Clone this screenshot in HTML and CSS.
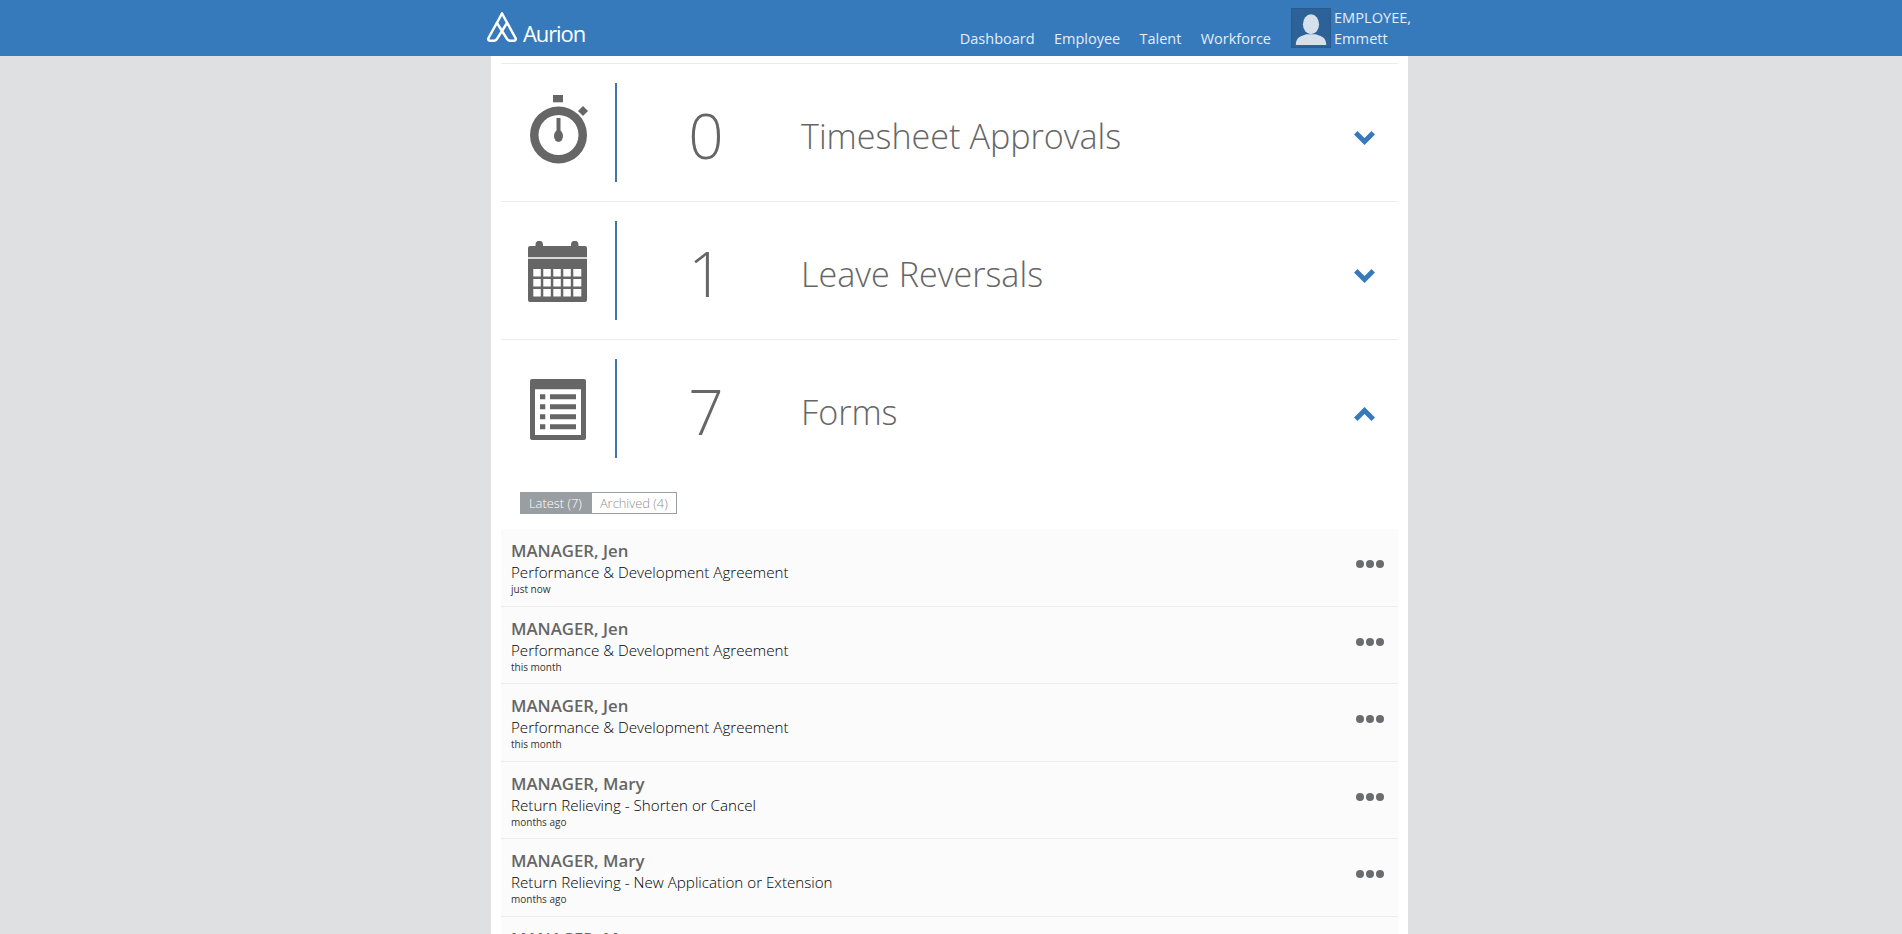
FILE: index.html

```html
<!DOCTYPE html>
<html lang="en">
<head>
  <meta charset="UTF-8">
  <title>Aurion</title>
  <link rel="stylesheet" href="styles.css">
</head>
<body>
  <header class="topbar">
    <div class="topbar-inner">
      <a class="logo" href="#">
        <svg class="logo-mark" viewBox="0 0 30 30" width="30" height="30" fill="none" stroke="#fff" stroke-width="2.500" stroke-linejoin="round" stroke-linecap="round">
          <path d="M15 1.500 L1.500 26 Q0.500 28.800 3.500 28.800 H6.500 Q8.800 28.800 10 26.800 L20 11"/>
          <path d="M15 1.500 L28.500 26 Q29.500 28.800 26.500 28.800 H23.500 Q21.200 28.800 20 26.800 L10 11"/>
        </svg>
        <span class="logo-text">Aurion</span>
      </a>
      <nav class="nav">
        <a href="#">Dashboard</a>
        <a href="#">Employee</a>
        <a href="#">Talent</a>
        <a href="#">Workforce</a>
      </nav>
      <div class="user">
        <svg class="avatar" viewBox="0 0 40 40" width="40" height="40">
          <rect width="40" height="40" fill="#2d6298"/>
          <ellipse cx="20" cy="16" rx="8.500" ry="10.500" fill="#d5e0ec"/>
          <path d="M4 38 C4 31 7 29 15 26.500 H25 C33 29 36 31 36 38 Z" fill="#d5e0ec"/>
        </svg>
        <div class="user-name">EMPLOYEE,<br>Emmett</div>
      </div>
    </div>
  </header>

  <main class="panel">
    <section class="summary">
      <div class="summary-icon">
        <svg class="icon-timer" viewBox="0 0 58 70" width="58" height="70" fill="#666">
          <rect x="23" y="0" width="10" height="7.300"/>
          <path fill-rule="evenodd" d="M28.500 11.500a28.500 28.500 0 1 0 0 57a28.500 28.500 0 0 0 0-57zM28.500 20a20 20 0 1 1 0 40a20 20 0 0 1 0-40z"/>
          <path d="M53 11l5 5-5 5-5-5z"/>
          <rect x="26.500" y="23" width="4" height="14"/>
          <ellipse cx="28.500" cy="41" rx="4.500" ry="6"/>
        </svg>
      </div>
      <div class="count">0</div>
      <h2 class="title">Timesheet Approvals</h2>
      <svg class="chevron" viewBox="0 0 21 14" width="21" height="14"><path d="M0 3.500 3.500 0 10.500 7 17.500 0 21 3.500 10.500 14z" fill="#377abc"/></svg>
    </section>

    <section class="summary">
      <div class="summary-icon">
        <svg class="icon-calendar" viewBox="0 0 59 61" width="59" height="61" fill="#666">
          <path d="M7.500 5V3.500a3.700 3.700 0 0 1 7.500 0V5h28V3.500a3.700 3.700 0 0 1 7.500 0V5H57a2 2 0 0 1 2 2v9.300H0V7a2 2 0 0 1 2-2z"/>
          <path fill-rule="evenodd" d="M0 17.700h59V59a2 2 0 0 1-2 2H2a2 2 0 0 1-2-2zM5.300 28v7.500h7.500V28zM15.300 28v7.500h7.500V28zM25.300 28v7.500h7.500V28zM35.300 28v7.500h7.500V28zM45.300 28v7.500h8V28zM5.300 38v7.500h7.500V38zM15.300 38v7.500h7.500V38zM25.300 38v7.500h7.500V38zM35.300 38v7.500h7.500V38zM45.300 38v7.500h8V38zM5.300 48v7.500h7.500V48zM15.300 48v7.500h7.500V48zM25.300 48v7.500h7.500V48zM35.300 48v7.500h7.500V48zM45.300 48v7.500h8V48z"/>
        </svg>
      </div>
      <div class="count">1</div>
      <h2 class="title">Leave Reversals</h2>
      <svg class="chevron" viewBox="0 0 21 14" width="21" height="14"><path d="M0 3.500 3.500 0 10.500 7 17.500 0 21 3.500 10.500 14z" fill="#377abc"/></svg>
    </section>

    <section class="summary">
      <div class="summary-icon">
        <svg class="icon-forms" viewBox="0 0 56 61" width="56" height="61" fill="#666">
          <path fill-rule="evenodd" d="M2 0h52a2 2 0 0 1 2 2v57a2 2 0 0 1-2 2H2a2 2 0 0 1-2-2V2a2 2 0 0 1 2-2zM5 10.300V56h46V10.300z"/>
          <path d="M10 15.300h5.300v5H10zM20 15.300h26v5H20zM10 25.300h5.300v5H10zM20 25.300h26v5H20zM10 35.300h5.300v5H10zM20 35.300h26v5H20zM10 45.300h5.300v5H10zM20 45.300h26v5H20z"/>
        </svg>
      </div>
      <div class="count">7</div>
      <h2 class="title">Forms</h2>
      <svg class="chevron chevron-up" viewBox="0 0 21 14" width="21" height="14"><path d="M0 3.500 3.500 0 10.500 7 17.500 0 21 3.500 10.500 14z" fill="#377abc"/></svg>
    </section>

    <div class="tabs">
      <a class="tab tab-active" href="#">Latest (7)</a>
      <a class="tab" href="#">Archived (4)</a>
    </div>

    <ul class="forms">
      <li class="form-row">
        <div>
          <div class="form-name">MANAGER, Jen</div>
          <div class="form-type">Performance &amp; Development Agreement</div>
          <div class="form-time">just now</div>
        </div>
        <div class="dots"><i></i><i></i><i></i></div>
      </li>
      <li class="form-row">
        <div>
          <div class="form-name">MANAGER, Jen</div>
          <div class="form-type">Performance &amp; Development Agreement</div>
          <div class="form-time">this month</div>
        </div>
        <div class="dots"><i></i><i></i><i></i></div>
      </li>
      <li class="form-row">
        <div>
          <div class="form-name">MANAGER, Jen</div>
          <div class="form-type">Performance &amp; Development Agreement</div>
          <div class="form-time">this month</div>
        </div>
        <div class="dots"><i></i><i></i><i></i></div>
      </li>
      <li class="form-row">
        <div>
          <div class="form-name">MANAGER, Mary</div>
          <div class="form-type">Return Relieving - Shorten or Cancel</div>
          <div class="form-time">months ago</div>
        </div>
        <div class="dots"><i></i><i></i><i></i></div>
      </li>
      <li class="form-row">
        <div>
          <div class="form-name">MANAGER, Mary</div>
          <div class="form-type">Return Relieving - New Application or Extension</div>
          <div class="form-time">months ago</div>
        </div>
        <div class="dots"><i></i><i></i><i></i></div>
      </li>
      <li class="form-row">
        <div>
          <div class="form-name">MANAGER, Mary</div>
        </div>
      </li>
    </ul>
  </main>
</body>
</html>
```

FILE: styles.css

```css
html, body {
  height: 100%;
  overflow: hidden;
}

body {
  margin: 0;
  background: #dfe0e2;
  font-family: "Open Sans", sans-serif;
  color: #666;
}

a {
  color: inherit;
  text-decoration: none;
}

.topbar {
  height: 56px;
  background: #377abc;
  color: #e4edf6;
}

.topbar-inner {
  width: 932px;
  height: 56px;
  margin-left: calc(50% - 467px);
  display: flex;
}

.logo {
  display: flex;
  align-items: flex-end;
  gap: 6px;
  padding: 0 0 14px 3px;
  color: #fff;
}

.logo-text {
  font-size: 22px;
  line-height: 20px;
  font-weight: 400;
  letter-spacing: -1.100px;
  margin-bottom: -1px;
}

.nav {
  margin-left: auto;
  display: flex;
  gap: 19.300px;
  padding-top: 28px;
  font-size: 14.500px;
  line-height: 22px;
}

.user {
  display: flex;
  gap: 3px;
  margin: 8px 0 0 20px;
  width: 125px;
}

.avatar {
  display: block;
  border: 1px solid #2b5a8c;
  box-sizing: border-box;
}

.user-name {
  font-size: 14.600px;
  line-height: 21px;
  margin-top: -1px;
}

.panel {
  width: 917px;
  margin-left: calc(50% - 460px);
  padding: 7px 10px 0;
  box-sizing: border-box;
  background: #fff;
  min-height: 878px;
}

.summary {
  height: 138px;
  border-top: 1px solid #e9eded;
  display: flex;
  align-items: center;
  box-sizing: border-box;
}

.summary-icon {
  width: 114px;
  height: 99px;
  border-right: 2px solid #3f76a5;
  display: flex;
  align-items: center;
  justify-content: center;
  flex: none;
}

.icon-timer {
  margin: -5px 0 0 1px;
}

.icon-calendar {
  margin: 2px 2px 0 0;
}

.icon-forms {
  margin-top: 2px;
}

.count {
  width: 178px;
  margin-top: 6px;
  text-align: center;
  font-size: 62px;
  font-weight: 300;
  line-height: 99px;
  flex: none;
}

.title {
  margin: 5px 0 0 6px;
  font-size: 34.150px;
  font-weight: 300;
  flex: 1;
}

.chevron {
  margin: 11px 23px 0 0;
}

.chevron-up {
  transform: scaleY(-1);
}

.tabs {
  display: flex;
  margin: 15px 0 15px 19px;
  font-size: 12.900px;
  font-weight: 300;
  line-height: 20px;
}

.tab {
  border: 1px solid #999ea2;
  padding: 0 8px;
  color: #8f8f8f;
}

.tab-active {
  background: #999ea2;
  color: #fff;
}

.forms {
  list-style: none;
  margin: 0;
  padding: 0;
}

.form-row {
  height: 77.500px;
  box-sizing: border-box;
  background: #fbfbfb;
  border-bottom: 1px solid #e9eded;
  padding: 10px 14px 0 10px;
  display: flex;
  justify-content: space-between;
}

.form-name {
  font-size: 16.800px;
  font-weight: 600;
  line-height: 24px;
}

.form-type {
  font-size: 15.170px;
  font-weight: 300;
  line-height: 19px;
  color: #000;
}

.form-time {
  font-size: 10px;
  line-height: 14px;
  color: #333;
}

.dots {
  display: flex;
  gap: 2px;
  margin-top: 21px;
}

.dots i {
  width: 8px;
  height: 8px;
  border-radius: 50%;
  background: #6a6c70;
}
```
